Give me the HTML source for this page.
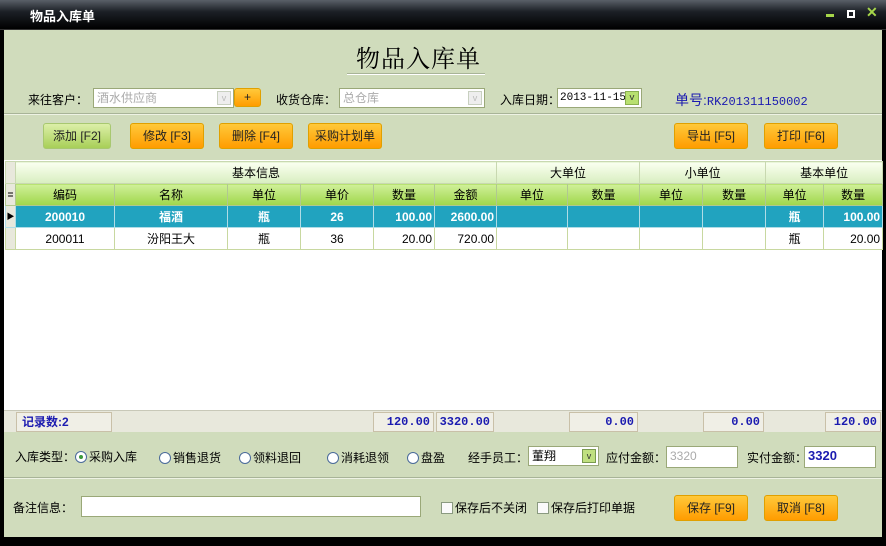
<!DOCTYPE html><html><head><meta charset="utf-8"><style>
*{margin:0;padding:0;box-sizing:border-box}
body{width:886px;height:546px;position:relative;overflow:hidden;background:#000;font-family:"Liberation Sans","Noto Sans CJK SC",sans-serif;font-size:12px;color:#000}
.a{position:absolute}
#tb{left:0;top:0;width:886px;height:30px;background:linear-gradient(#5a6068,#1c2026 40%,#000);border-bottom:1px solid #333}
#main{left:4px;top:30px;width:878px;height:507px;background:#d0dcbc}
.btn{position:absolute;height:26px;border:1px solid #e0a000;border-radius:3px;background:linear-gradient(#ffc93a,#ff9c00);font-size:12px;text-align:center;line-height:24px;color:#222}
.btnG{background:linear-gradient(#dcefa8,#a8cf58);border-color:#a8c870}
.inp{position:absolute;height:20px;background:#fff;border:1px solid #9aa878;line-height:18px;padding-left:3px}
.dd{position:absolute;width:14px;height:14px;top:2px;right:2px;border:1px solid #c8d0c0;background:#eee;color:#bbb;font-size:9px;text-align:center;line-height:12px}
.hr{position:absolute;left:0;width:878px;height:2px;border-top:1px solid #a8b498;border-bottom:1px solid #eef3e4}
table{border-collapse:collapse;position:absolute;table-layout:fixed}
td{border:1px solid #c8d8a0;text-align:center;height:22px;padding:0 2px;font-size:12px;white-space:nowrap}
.g td{background:linear-gradient(#fafff0,#d8eec0);border-color:#c8d8b0}
.h td{background:linear-gradient(#d0f09a,#9fd64a);border-color:#b0c890}
.sel td{background:#21a3bf;color:#fff;font-weight:bold;border-color:#b0dce6}
.r td{background:#fff}
.n{text-align:right!important}
.ft{position:absolute;top:411px;height:20px;border:1px solid #c9c0a8;background:#f0efe6;color:#1b1bb0;font-weight:bold;font-family:"Liberation Mono",monospace;text-align:right;line-height:18px;padding-right:3px}
.rad{display:inline-block;width:12px;height:12px;border:1px solid #4a6a9a;border-radius:50%;background:#fff;vertical-align:-2px;margin-right:2px;position:relative}
.lab{position:absolute;font-size:12px;white-space:nowrap}
.cb{display:inline-block;width:12px;height:12px;border:1px solid #8a9a80;background:#fafafa;vertical-align:-2px;margin-right:2px}
</style></head><body>
<div id="tb" class="a"><div class="a" style="left:30px;top:6px;color:#fff;font-weight:bold;font-size:13px">物品入库单</div>
<div class="a" style="left:826px;top:14px;width:8px;height:3px;background:#a6d64a"></div>
<div class="a" style="left:847px;top:10px;width:8px;height:8px;border:2px solid #fff"></div>
<div class="a" style="left:866px;top:4px;color:#a6d64a;font-weight:bold;font-size:14px">✕</div></div>
<div id="main" class="a">
<div class="a" style="left:352px;top:9px;font-family:'Noto Serif CJK SC',serif;font-size:24px;letter-spacing:1px">物品入库单</div>
<div class="a" style="left:343px;top:43px;width:138px;height:2px;border-top:1px solid #a8b498;border-bottom:1px solid #fff"></div>
<div class="lab" style="left:24px;top:61px">来往客户：</div>
<div class="inp" style="left:89px;top:58px;width:141px;color:#aaa">酒水供应商<div class="dd">v</div></div>
<div class="btn" style="left:230px;top:58px;width:27px;height:19px;line-height:17px">+</div>
<div class="lab" style="left:272px;top:61px">收货仓库：</div>
<div class="inp" style="left:335px;top:58px;width:146px;color:#aaa">总仓库<div class="dd">v</div></div>
<div class="lab" style="left:496px;top:61px">入库日期：</div>
<div class="inp" style="left:553px;top:58px;width:85px;font-family:'Liberation Mono',monospace;font-size:11px;padding-left:2px">2013-11-15<div class="dd" style="background:#b8e070;color:#333;border-color:#8ab050">v</div></div>
<div class="lab" style="left:671px;top:60px;color:#1b1bb0;font-size:14px">单号:<span style="font-family:'Liberation Mono',monospace;font-size:12px">RK201311150002</span></div>
<div class="hr" style="top:83px"></div>
<div class="btn btnG" style="left:39px;top:93px;width:68px">添加 [F2]</div>
<div class="btn" style="left:126px;top:93px;width:74px">修改 [F3]</div>
<div class="btn" style="left:215px;top:93px;width:74px">删除 [F4]</div>
<div class="btn" style="left:304px;top:93px;width:74px">采购计划单</div>
<div class="btn" style="left:670px;top:93px;width:74px">导出 [F5]</div>
<div class="btn" style="left:760px;top:93px;width:74px">打印 [F6]</div>
<div class="a" style="left:0;top:130px;width:878px;height:251px;background:#fff"></div>
<table style="left:1px;top:131px;width:877px">
<colgroup><col style="width:10px"><col style="width:99px"><col style="width:113px"><col style="width:73px"><col style="width:73px"><col style="width:61px"><col style="width:62px"><col style="width:71px"><col style="width:72px"><col style="width:63px"><col style="width:63px"><col style="width:58px"><col style="width:59px"></colgroup>
<tr class="g"><td style="background:#e8e8dc"></td><td colspan="6">基本信息</td><td colspan="2">大单位</td><td colspan="2">小单位</td><td colspan="2">基本单位</td></tr>
<tr class="h"><td style="background:#e8e8dc;font-size:8px;padding:0">≣</td><td>编码</td><td>名称</td><td>单位</td><td>单价</td><td>数量</td><td>金额</td><td>单位</td><td>数量</td><td>单位</td><td>数量</td><td>单位</td><td>数量</td></tr>
<tr class="sel"><td style="background:#e8e8dc;color:#000;font-size:8px;padding:0">▶</td><td>200010</td><td>福酒</td><td>瓶</td><td>26</td><td class="n">100.00</td><td class="n">2600.00</td><td></td><td></td><td></td><td></td><td>瓶</td><td class="n">100.00</td></tr>
<tr class="r"><td style="background:#e8e8dc"></td><td>200011</td><td>汾阳王大</td><td>瓶</td><td>36</td><td class="n">20.00</td><td class="n">720.00</td><td></td><td></td><td></td><td></td><td>瓶</td><td class="n">20.00</td></tr>
</table>
<div class="a" style="left:0;top:380px;width:878px;height:22px;background:#e8e8dc;border-top:1px solid #c8c8b8"></div>
<div class="ft" style="left:12px;top:382px;width:96px;text-align:left;padding-left:5px;font-family:'Liberation Sans','Noto Sans CJK SC',sans-serif">记录数:2</div>
<div class="ft" style="left:369px;top:382px;width:61px">120.00</div>
<div class="ft" style="left:432px;top:382px;width:58px">3320.00</div>
<div class="ft" style="left:565px;top:382px;width:69px">0.00</div>
<div class="ft" style="left:699px;top:382px;width:61px">0.00</div>
<div class="ft" style="left:821px;top:382px;width:56px">120.00</div>
<div class="lab" style="left:11px;top:418px">入库类型：<span class="rad"><span class="a" style="left:3px;top:3px;width:4px;height:4px;background:#3a9a3a;border-radius:50%"></span></span>采购入库</div>
<div class="lab" style="left:155px;top:419px"><span class="rad"></span>销售退货</div>
<div class="lab" style="left:235px;top:419px"><span class="rad"></span>领料退回</div>
<div class="lab" style="left:323px;top:419px"><span class="rad"></span>消耗退领</div>
<div class="lab" style="left:403px;top:419px"><span class="rad"></span>盘盈</div>
<div class="lab" style="left:464px;top:419px">经手员工：</div>
<div class="inp" style="left:524px;top:416px;width:71px">董翔<div class="dd" style="background:#c0e080;color:#333;border-color:#7a9a50">v</div></div>
<div class="lab" style="left:602px;top:419px">应付金额：</div>
<div class="inp" style="left:662px;top:416px;width:72px;height:22px;color:#aaa">3320</div>
<div class="lab" style="left:743px;top:419px">实付金额：</div>
<div class="inp" style="left:800px;top:416px;width:72px;height:22px;color:#1b1bb0;font-weight:bold;font-size:13px">3320</div>
<div class="hr" style="top:447px"></div>
<div class="lab" style="left:9px;top:469px">备注信息：</div>
<div class="inp" style="left:77px;top:466px;width:340px;height:21px"></div>
<div class="lab" style="left:437px;top:469px"><span class="cb"></span>保存后不关闭</div>
<div class="lab" style="left:533px;top:469px"><span class="cb"></span>保存后打印单据</div>
<div class="btn" style="left:670px;top:465px;width:74px">保存 [F9]</div>
<div class="btn" style="left:760px;top:465px;width:74px">取消 [F8]</div>
</div>
</body></html>
